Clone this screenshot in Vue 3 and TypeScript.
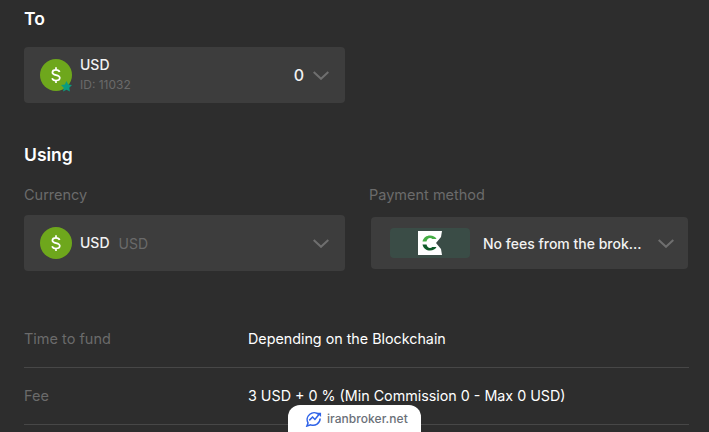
<script setup lang="ts">
const rows = [
  { label: 'Time to fund', value: 'Depending on the Blockchain' },
  { label: 'Fee', value: '3 USD + 0 % (Min Commission 0 - Max 0 USD)' },
]
</script>

<template>
  <div class="page">
    <h2 class="title to">To</h2>
    <div class="card account">
      <span class="coin">
        <svg width="32" height="32" viewBox="0 0 32 32"><circle cx="16" cy="16" r="16" fill="#6ea71c"/><path d="M19.600 13c-.4-1.400-1.800-2.200-3.600-2.200-2.100 0-3.600 1-3.600 2.600 0 3.600 7.400 1.800 7.400 5.400 0 1.700-1.600 2.700-3.800 2.700-2 0-3.400-.8-3.900-2.300M16 8.300v2.500M16 21.500v2.500" fill="none" stroke="#fff" stroke-width="1.700"/></svg>
        <svg class="star" width="11" height="11" viewBox="0 0 24 24"><path d="M12 0l3.800 7.600 8.200 1.200-5.900 5.800 1.400 8.400-7.500-4-7.500 4 1.400-8.400L0 8.800l8.200-1.200z" fill="#0a9c80"/></svg>
      </span>
      <span class="stack">
        <span class="name">USD</span>
        <span class="id">ID: 11032</span>
      </span>
      <span class="amount">0</span>
      <svg class="chev" width="16" height="9" viewBox="0 0 16 9"><path d="M.7 1l7.300 6.800L15.300 1" fill="none" stroke="#6f6f6f" stroke-width="2"/></svg>
    </div>

    <h2 class="title using">Using</h2>
    <div class="cols">
      <div class="col-left">
        <div class="label">Currency</div>
        <div class="card currency">
          <svg width="32" height="32" viewBox="0 0 32 32"><circle cx="16" cy="16" r="16" fill="#6ea71c"/><path d="M19.600 13c-.4-1.400-1.800-2.200-3.600-2.200-2.100 0-3.600 1-3.600 2.600 0 3.600 7.400 1.800 7.400 5.400 0 1.700-1.600 2.700-3.800 2.700-2 0-3.400-.8-3.900-2.300M16 8.300v2.500M16 21.500v2.500" fill="none" stroke="#fff" stroke-width="1.700"/></svg>
          <span class="name cur">USD</span>
          <span class="sub">USD</span>
          <svg class="chev push" width="16" height="9" viewBox="0 0 16 9"><path d="M.7 1l7.300 6.800L15.300 1" fill="none" stroke="#6f6f6f" stroke-width="2"/></svg>
        </div>
      </div>
      <div class="col-right">
        <div class="label">Payment method</div>
        <div class="card method">
          <span class="logo-box">
            <svg width="24" height="24" viewBox="0 0 24 24"><path d="M0 0h24l-1 6-5 6 5 6 1 6H0z" fill="#fff"/><path d="M4.500 10.500C5.500 6.500 8.500 4.500 12 4.500c3 0 5.500 1.200 6.500 3.500h-4.200c-.6-.7-1.300-1-2.300-1-1.700 0-3 1.200-3.500 3.500z" fill="#45ad45"/><path d="M4.500 13.500c1 4 4 6 7.500 6 3 0 5.500-1.200 6.500-3.500h-4.200c-.6.7-1.300 1-2.300 1-1.700 0-3-1.200-3.500-3.500z" fill="#0f5a2a"/></svg>
          </span>
          <span class="method-text">No fees from the brok...</span>
          <svg class="chev push" width="16" height="9" viewBox="0 0 16 9"><path d="M.7 1l7.300 6.800L15.300 1" fill="none" stroke="#6f6f6f" stroke-width="2"/></svg>
        </div>
      </div>
    </div>

    <div class="rows">
      <div v-for="r in rows" :key="r.label" class="row">
        <span class="row-label">{{ r.label }}</span>
        <span class="row-value">{{ r.value }}</span>
      </div>
    </div>

    <div class="badge">
      <svg width="17" height="17" viewBox="0 0 18 18"><path d="M14.500 4.800A7.300 7.300 0 0 0 3.200 13.700L2 17l4-1.300a7.300 7.300 0 0 0 10-6.700" fill="none" stroke="#2f63e8" stroke-width="1.600"/><path d="M4.500 11l3.500-3.500 2.500 2.500L15 4.500" fill="none" stroke="#2f63e8" stroke-width="1.600"/><path d="M12.500 3h4.500v4.500z" fill="#2f63e8"/></svg>
      <span>iranbroker.net</span>
    </div>
  </div>
</template>

<style>
html, body { margin: 0; background: #2d2d2d; overflow: hidden; }
</style>

<style scoped>
.page {
  position: relative;
  width: 709px;
  height: 432px;
  box-sizing: border-box;
  padding: 0 20px 0 24px;
  overflow: hidden;
  background: #2d2d2d;
  color: #fff;
  font-family: Inter, Roboto, "Liberation Sans", sans-serif;
  font-size: 14px;
}
.title { margin: 0; font-size: 17.500px; line-height: 24px; font-weight: 600; color: #fff; }
.to { padding-top: 7px; margin-bottom: 16px; }
.using { margin-top: 40px; margin-bottom: 16px; }
.card {
  display: flex;
  align-items: center;
  box-sizing: border-box;
  background: #3d3d3d;
  border-radius: 4px;
}
.account { width: 321px; height: 56px; padding: 0 16px; }
.coin { position: relative; display: block; width: 32px; height: 32px; }
.coin svg { display: block; }
.coin .star { position: absolute; right: 0; bottom: -1px; }
.stack { display: flex; flex-direction: column; margin-left: 8px; margin-top: -1px; }
.name { font-size: 14px; line-height: 20px; font-weight: 500; color: #f2f2f2; }
.id { font-size: 12px; line-height: 18px; margin-top: 1px; color: #6a6a6a; }
.amount { margin-left: auto; font-size: 16px; color: #f2f2f2; margin-right: 9px; font-weight: 500; }
.chev { display: block; flex: none; }
.cols { display: flex; }
.col-left { width: 321px; }
.col-right { width: 320px; margin-left: 24px; }
.label { font-size: 14.500px; line-height: 20px; height: 20px; margin-top: 2px; margin-bottom: 10px; color: #6b6b6b; }
.col-right .label { margin-bottom: 12px; }
.currency { height: 56px; padding: 0 16px; }
.cur { margin-left: 8px; }
.sub { margin-left: 9px; color: #6a6a6a; font-size: 14px; }
.push { margin-left: auto; }
.method { width: 317px; height: 52px; margin: 0 0 0 2px; padding: 0 14px 0 19px; }
.logo-box {
  display: flex;
  align-items: center;
  justify-content: center;
  width: 80px;
  height: 30px;
  background: #3a4c46;
  border-radius: 4px;
}
.method-text { margin-left: 13px; font-size: 14px; font-weight: 500; color: #f2f2f2; white-space: nowrap; }
.rows { margin-top: 40px; width: 665px; }
.row {
  display: flex;
  align-items: center;
  height: 57px;
  box-sizing: border-box;
  padding-bottom: 1px;
  border-bottom: 1px solid #474747;
}
.row-label { width: 224px; color: #6b6b6b; font-size: 14.500px; }
.row-value { color: #fff; font-size: 14.300px; }
.badge {
  position: absolute;
  left: 288px;
  bottom: 0;
  width: 133px;
  height: 27px;
  box-sizing: border-box;
  padding-left: 17px;
  display: flex;
  align-items: center;
  gap: 5px;
  background: #fff;
  border-radius: 12px 12px 0 0;
  color: #6a6f78;
  font-size: 12px;
  font-weight: 500;
  letter-spacing: .05px;
}
</style>
